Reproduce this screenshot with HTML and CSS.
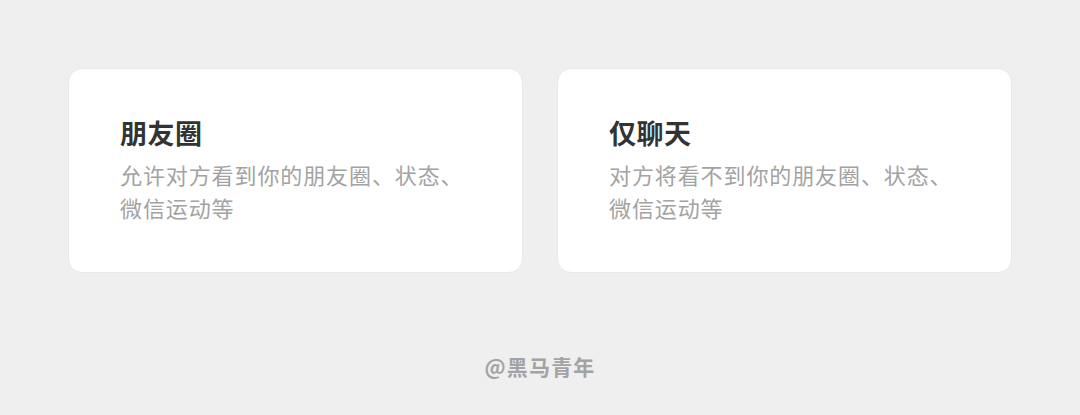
FILE: index.html
```html
<!DOCTYPE html>
<html lang="zh-CN">
<head>
    <meta charset="UTF-8">
    <meta name="viewport" content="width=device-width, initial-scale=1.0">
    <title>朋友权限</title>
    <link rel="stylesheet" href="styles.css">
</head>
<body>
    <main class="page">
        <section class="options">
            <div class="card">
                <h2 class="cardTitle">朋友圈</h2>
                <p class="cardDesc">允许对方看到你的朋友圈、状态、<br>微信运动等</p>
            </div>
            <div class="card">
                <h2 class="cardTitle">仅聊天</h2>
                <p class="cardDesc">对方将看不到你的朋友圈、状态、<br>微信运动等</p>
            </div>
        </section>
        <footer class="credit">@黑马青年</footer>
    </main>
</body>
</html>
```

FILE: styles.css
```css
/* page background & base font */
body {
    margin: 0;
    background-color: #efefef;
    font-family: "Noto Sans CJK SC", "Noto Sans", sans-serif;
}

.page {
    padding: 68px 68px 0 68px;
}

/* two cards side by side */
.options {
    display: grid;
    grid-template-columns: 455px 455px;
    gap: 34px;
}

.card {
    box-sizing: border-box;
    height: 205px;
    padding: 45px 51px 0 51px;
    background-color: #fff;
    border: 1px solid #e9e9e9;
    border-radius: 14px;
}

.cardTitle {
    margin: 0;
    font-size: 27px;
    line-height: 38px;
    font-weight: 700;
    color: #333;
    letter-spacing: 0.5px;
}

.cardDesc {
    margin: 6px 0 0 0;
    font-size: 22px;
    line-height: 33px;
    color: #a3a3a3;
    letter-spacing: 0.9px;
}

/* watermark at the bottom */
.credit {
    margin-top: 78px;
    text-align: center;
    font-size: 21px;
    line-height: 30px;
    font-weight: 700;
    color: #a3a3a3;
    letter-spacing: 1.2px;
}
```
